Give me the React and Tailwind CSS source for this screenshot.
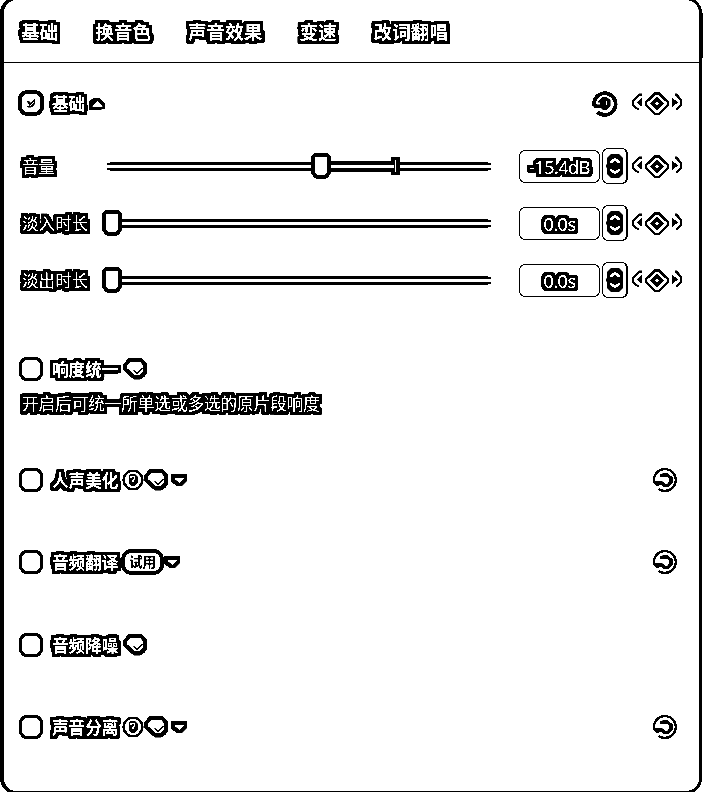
import React from "react";

// Square-cornered 3px outline built from stacked offsets.
const OUTLINE =
  "whitespace-nowrap text-white [text-shadow:3px_3px_#000,-3px_3px_#000,3px_-3px_#000,-3px_-3px_#000,3px_0_#000,-3px_0_#000,0_3px_#000,0_-3px_#000,3px_1px_#000,3px_-1px_#000,-3px_1px_#000,-3px_-1px_#000,1px_3px_#000,-1px_3px_#000,1px_-3px_#000,-1px_-3px_#000,3px_2px_#000,3px_-2px_#000,-3px_2px_#000,-3px_-2px_#000,2px_3px_#000,-2px_3px_#000,2px_-3px_#000,-2px_-3px_#000,2px_0_#000,-2px_0_#000,0_2px_#000,0_-2px_#000,1px_1px_#000,-1px_1px_#000,1px_-1px_#000,-1px_-1px_#000,1px_0_#000,-1px_0_#000,0_1px_#000,0_-1px_#000,2px_2px_#000,-2px_2px_#000,2px_-2px_#000,-2px_-2px_#000]";

function Label({ children, className = "" }) {
  return <span className={`${OUTLINE} text-[16.6px] leading-6 ${className}`}>{children}</span>;
}

function Keyframe() {
  return (
    <svg width="52" height="26" viewBox="631 90 52 26" className="shrink-0" fill="none" stroke="#000">
      <path d="M642 94.7h-3l-5.800 5.800v4.500l5.200 4.700" strokeWidth="2.200" />
      <path d="M642.300 97.500v9.500l-6-4.600z" fill="#000" stroke="none" />
      <path d="M655 93.500h4l9 8.500v3l-9 9h-4l-9-9v-3z" strokeWidth="2.600" strokeLinejoin="round" />
      <path d="M657 96.300l7.200 7.200-7.200 7.200-7.200-7.200z" fill="#000" stroke="none" />
      <path d="M657 101.200l2.300 2.300-2.300 2.300-2.300-2.300z" fill="#fff" stroke="none" />
      <path d="M672 97.500v9.500l6-4.600z" fill="#000" stroke="none" />
      <path d="M675 94.700h1.500l4.800 5.800v4l-5.300 5" strokeWidth="2.200" />
    </svg>
  );
}

function Reset() {
  return (
    <svg width="26" height="26" viewBox="-13 -13 26 26" className="shrink-0" fill="none" stroke="#000">
      <path d="M-6 5.300l-3-1.300-2-2v-2.500A10.900 10.900 0 1 1-6.300 9" strokeWidth="2.400" />
      <path d="M-5-4.300L-1-5h3l4 3v4l-3 3.500H-1L-3 3" strokeWidth="3.400" />
      <path d="M-10.500 1h8v4h-4z" fill="#000" stroke="none" />
    </svg>
  );
}

function ResetBold() {
  return (
    <svg width="28" height="28" viewBox="-14 -14 28 28" className="shrink-0" fill="none" stroke="#000">
      <path d="M-10.800 3.500v-4.500A10.800 10.800 0 1 1-7.500 9" strokeWidth="3.800" />
      <path d="M-5.500-3.500l3-2.500h4l4 3v6l-3.500 4h-4l-2-2h-7v-3.500h6v-2h-3z" fill="#000" stroke="none" />
      <path d="M1.500-2v4" strokeWidth="1.800" stroke="#fff" />
    </svg>
  );
}

function Gem() {
  return (
    <svg width="24" height="22" viewBox="0 0 24 22" className="shrink-0" fill="none" stroke="#000">
      <path d="M6.500 2h11.500l4 4.500v8l-4.500 5h-6L2 11v-4z" fill="#fff" strokeWidth="4" strokeLinejoin="round" />
      <path d="M10.500 12.500l3.700 3L19.500 10" strokeWidth="1.300" />
      <path d="M12.500 17.500l3.500 .5 5.500-6v7h-8z" fill="#000" stroke="none" />
    </svg>
  );
}

function Caret({ up = false }) {
  return up ? (
    <svg width="16" height="14" viewBox="0 0 16 14" className="shrink-0">
      <path d="M0 4L5 1h5l6 5v6l-7 1H0z" />
      <path d="M8.500 4l5.500 5.800H3z" fill="#fff" />
    </svg>
  ) : (
    <svg width="16" height="14" viewBox="0 0 16 14" className="shrink-0">
      <path d="M0 1h16v7l-5 5H6L0 9z" />
      <path d="M3 5.200h10.500L8.300 10z" fill="#fff" />
    </svg>
  );
}

function Help() {
  return (
    <svg width="22" height="24" viewBox="0 0 22 24" className="shrink-0" fill="none" stroke="#000">
      <circle cx="11" cy="12" r="9.300" strokeWidth="2.600" />
      <path d="M8.500 6h4.500l3 3v5l-3 4h-4l-2-3V8z" fill="#000" stroke="none" />
      <path d="M9 10V8.500h3.500v2.300L11 12v2M11 15.200v1.500" stroke="#fff" strokeWidth="1.200" />
    </svg>
  );
}

function CheckBox({ checked = false }) {
  return checked ? (
    <span className="-ml-px flex h-[26px] w-[26px] shrink-0 items-center justify-center rounded-[9px] border-4 border-black">
      <svg width="12" height="12" viewBox="0 0 12 12">
        <path d="M2 4.500l2-.5 2 2 4-4.500V7L6.500 10.500H3L1.500 9.500l2.500-1z" />
        <path d="M3 7.500l2.500 1L9 5" fill="none" stroke="#fff" strokeWidth=".8" />
      </svg>
    </span>
  ) : (
    <span className="mr-px h-6 w-6 shrink-0 rounded-[8px] border-[3px] border-black" />
  );
}

function Slider({ volume = false }) {
  return (
    <div className="relative ml-[4px] flex h-[27px] w-[389px] shrink-0 items-center pl-[5px]">
      <div className="-mt-px box-content h-[3px] w-[3px] border-y-2 border-black" />
      <div className="h-[9px] w-[378px] border-y-[3px] border-black" />
      <div className="-mt-px box-content h-[3px] w-[3px] border-y-2 border-black" />
      {volume && (
        <>
          <div className="absolute left-[289px] top-1 h-[18px] w-[9px] border-x-[4px] border-y-[3px] border-black bg-white" />
          <div className="absolute left-[227px] top-2 h-[11px] w-[65px] border-y-4 border-black bg-white" />
        </>
      )}
      <div
        className={`absolute top-0 h-[26px] w-5 rounded-b-[8px] rounded-t-[5px] border-4 border-black bg-white ${volume ? "left-[209px]" : "left-0"}`}
      />
    </div>
  );
}

function Stepper() {
  return (
    <div className="ml-[2px] flex h-9 w-[26px] shrink-0 items-center justify-center rounded-[6px] border border-r-2 border-black">
      <svg width="18" height="24" viewBox="0 0 18 24" fill="none">
        <path d="M5 0h8l4 4v16l-4 4H5l-4-4v-6l-1-1v-2l1-1V4z" fill="#000" />
        <path d="M4.300 8.700L9 5l4.700 3.700M4.300 15.500L9 19l4.700-3.500" stroke="#fff" strokeWidth="2.400" />
      </svg>
    </div>
  );
}

function Param({ name, value, volume }) {
  return (
    <div className="flex h-[57px] items-center">
      <div className="-mt-[2px] w-[79px] shrink-0 pl-[3px]">
        <Label>{name}</Label>
      </div>
      <Slider volume={volume} />
      <div className="ml-[28px] flex h-[33px] w-[81px] shrink-0 items-center justify-center rounded-[6px] border border-black">
        <span className={`${OUTLINE} font-['Noto_Sans',sans-serif] text-[18px] leading-6 tracking-[-0.500px]`}>{value}</span>
      </div>
      <div className="-mt-px flex">
        <Stepper />
      </div>
      <div className="-mt-px ml-[3px] flex">
        <Keyframe />
      </div>
    </div>
  );
}

function Section({ name, checked, gap, children, right }) {
  return (
    <div className={`flex h-9 items-center ${gap}`}>
      <CheckBox checked={checked} />
      <Label className={`-mt-px ml-[8px] w-[70px] shrink-0 font-bold ${checked ? "max-w-[37px]" : ""}`}>{name}</Label>
      {children}
      {right}
    </div>
  );
}

export default function App() {
  const tabs = ["基础", "换音色", "声音效果", "变速", "改词翻唱"];
  const reset = <div className="ml-auto mr-[21px] flex"><Reset /></div>;
  return (
    <div className="h-[792px] w-[708px] overflow-hidden bg-white font-['Noto_Sans_CJK_SC',sans-serif] text-black contrast-[20]">
      <div className="relative -mt-[3px] h-[797px] w-[702px] rounded-[16px] border-[3px] border-l-4 border-black">
        <span className="absolute -right-1 top-[13px] h-[45px] w-px bg-black" />
        <nav className="flex h-[63px] items-center gap-[37px] border-b border-black pl-[17px]">
          {tabs.map((t) => (
            <span key={t} className={`${OUTLINE} text-[18.600px] font-bold leading-7`}>{t}</span>
          ))}
        </nav>
        <main className="pl-[15px] pt-[22px]">
          <Section
            name="基础"
            checked
            gap=""
            right={
              <div className="ml-auto mr-[16px] flex items-center gap-[12px]">
                <ResetBold />
                <Keyframe />
              </div>
            }
          >
            <div className="mt-[2px]"><Caret up /></div>
          </Section>
          <div className="mt-[17px]">
            <Param name="音量" value="-15.4dB" volume />
            <Param name="淡入时长" value="0.0s" />
            <Param name="淡出时长" value="0.0s" />
          </div>
          <Section name="响度统一" gap="mt-[42px]">
            <div className="ml-px"><Gem /></div>
          </Section>
          <p className="-mt-px flex h-[34px] items-center pl-[3px]">
            <Label className="tracking-[-0.050px]">开启后可统一所单选或多选的原片段响度</Label>
          </p>
          <Section name="人声美化" gap="mt-[42px]" right={reset}>
            <Help />
            <Gem />
            <div className="ml-[3px]"><Caret /></div>
          </Section>
          <Section name="音频翻译" gap="mt-[46px]" right={reset}>
            <span className="-ml-px flex h-[26px] w-[43px] shrink-0 items-center justify-center rounded-[10px] border-4 border-black text-[13.500px] font-bold leading-none">
              试用
            </span>
            <Caret />
          </Section>
          <Section name="音频降噪" gap="mt-[47px]">
            <div className="ml-px"><Gem /></div>
          </Section>
          <Section name="声音分离" gap="mt-[46px]" right={reset}>
            <Help />
            <Gem />
            <div className="ml-[3px]"><Caret /></div>
          </Section>
        </main>
      </div>
    </div>
  );
}
